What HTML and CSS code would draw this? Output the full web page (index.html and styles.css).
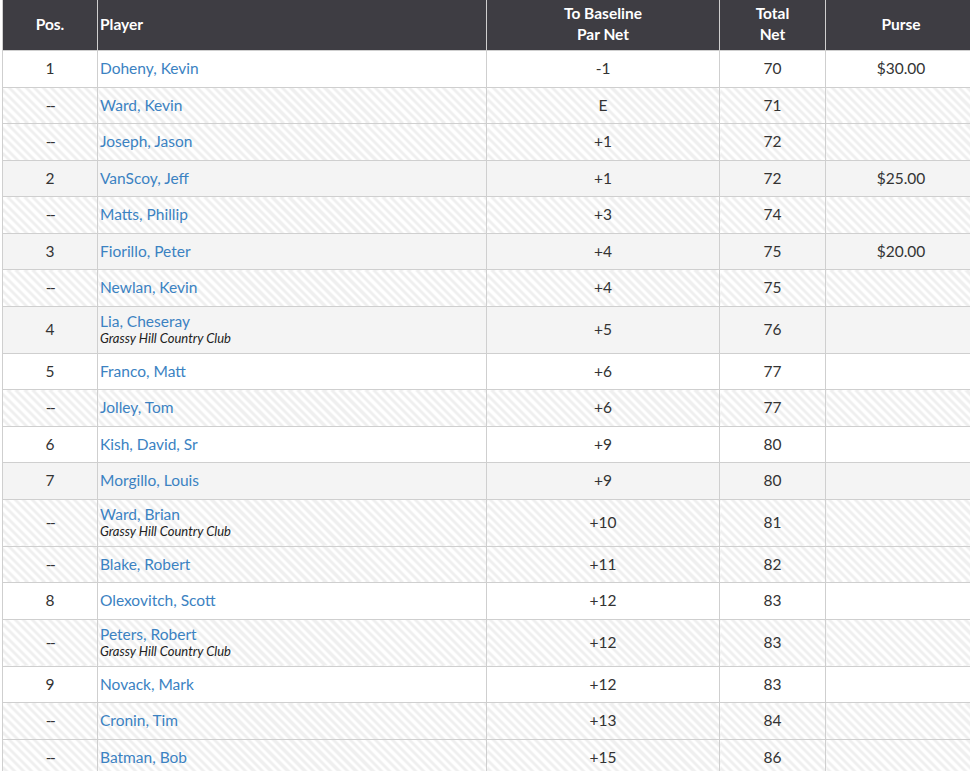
FILE: index.html
```html
<!DOCTYPE html>
<html>
<head>
<meta charset="utf-8">
<link rel="stylesheet" href="styles.css">
</head>
<body>
<div class="wrap">
<table class="board">
  <colgroup>
    <col class="c-pos"><col class="c-player"><col class="c-par"><col class="c-total"><col class="c-purse">
  </colgroup>
  <thead>
    <tr><th>Pos.</th><th class="left">Player</th><th>To Baseline<br>Par Net</th><th>Total<br>Net</th><th>Purse</th></tr>
  </thead>
  <tbody>
    <tr class="odd"><td>1</td><td class="player"><a>Doheny, Kevin</a></td><td>-1</td><td>70</td><td>$30.00</td></tr>
    <tr class="tie"><td class="dash">--</td><td class="player"><a>Ward, Kevin</a></td><td>E</td><td>71</td><td></td></tr>
    <tr class="tie"><td class="dash">--</td><td class="player"><a>Joseph, Jason</a></td><td>+1</td><td>72</td><td></td></tr>
    <tr class="even"><td>2</td><td class="player"><a>VanScoy, Jeff</a></td><td>+1</td><td>72</td><td>$25.00</td></tr>
    <tr class="tie"><td class="dash">--</td><td class="player"><a>Matts, Phillip</a></td><td>+3</td><td>74</td><td></td></tr>
    <tr class="even"><td>3</td><td class="player"><a>Fiorillo, Peter</a></td><td>+4</td><td>75</td><td>$20.00</td></tr>
    <tr class="tie"><td class="dash">--</td><td class="player"><a>Newlan, Kevin</a></td><td>+4</td><td>75</td><td></td></tr>
    <tr class="even"><td>4</td><td class="player two"><a>Lia, Cheseray</a><span class="club">Grassy Hill Country Club</span></td><td>+5</td><td>76</td><td></td></tr>
    <tr class="odd"><td>5</td><td class="player"><a>Franco, Matt</a></td><td>+6</td><td>77</td><td></td></tr>
    <tr class="tie"><td class="dash">--</td><td class="player"><a>Jolley, Tom</a></td><td>+6</td><td>77</td><td></td></tr>
    <tr class="odd"><td>6</td><td class="player"><a>Kish, David, Sr</a></td><td>+9</td><td>80</td><td></td></tr>
    <tr class="even"><td>7</td><td class="player"><a>Morgillo, Louis</a></td><td>+9</td><td>80</td><td></td></tr>
    <tr class="tie"><td class="dash">--</td><td class="player two"><a>Ward, Brian</a><span class="club">Grassy Hill Country Club</span></td><td>+10</td><td>81</td><td></td></tr>
    <tr class="tie"><td class="dash">--</td><td class="player"><a>Blake, Robert</a></td><td>+11</td><td>82</td><td></td></tr>
    <tr class="odd"><td>8</td><td class="player"><a>Olexovitch, Scott</a></td><td>+12</td><td>83</td><td></td></tr>
    <tr class="tie"><td class="dash">--</td><td class="player two"><a>Peters, Robert</a><span class="club">Grassy Hill Country Club</span></td><td>+12</td><td>83</td><td></td></tr>
    <tr class="odd"><td>9</td><td class="player"><a>Novack, Mark</a></td><td>+12</td><td>83</td><td></td></tr>
    <tr class="tie"><td class="dash">--</td><td class="player"><a>Cronin, Tim</a></td><td>+13</td><td>84</td><td></td></tr>
    <tr class="tie"><td class="dash">--</td><td class="player"><a>Batman, Bob</a></td><td>+15</td><td>86</td><td></td></tr>
  </tbody>
</table>
</div>
</body>
</html>
```

FILE: styles.css
```css
html, body {
  margin: 0;
  padding: 0;
  background: #fff;
  overflow: hidden;
}
.wrap {
  padding-left: 2px;
  width: 1000px;
}
.board {
  border-collapse: collapse;
  table-layout: fixed;
  width: 974px;
  font-family: Lato, "Open Sans", sans-serif;
  font-size: 15.5px;
  color: #333;
}
.c-pos { width: 95px; }
.c-player { width: 389px; }
.c-par { width: 233px; }
.c-total { width: 106px; }
.c-purse { width: 151px; }
.board th {
  background: #3e3d43;
  color: #fff;
  font-weight: 700;
  font-size: 15.5px;
  line-height: 21px;
  height: 41px;
  padding: 3px 3px 5px;
  text-align: center;
  border: 1px solid #cfcfcf;
  border-top: 0;
}
.board th.left { text-align: left; padding-left: 2px; }
.board td {
  border: 1px solid #cfcfcf;
  padding: 8.25px 3px 9.25px;
  line-height: 18px;
  text-align: center;
  vertical-align: middle;
}
.board td.player {
  text-align: left;
  padding-left: 2px;
}
.board td.player.two {
  padding-top: 5px;
  padding-bottom: 7px;
}
.player a {
  display: block;
  color: #3b82c2;
  text-decoration: none;
}
.club {
  display: block;
  font-size: 13px;
  font-style: italic;
  line-height: 16px;
  color: #222;
}
.dash { letter-spacing: -1.5px; }
tr.odd td { background: #fff; }
tr.even td { background: #f4f4f4; }
tr.tie td {
  background: repeating-linear-gradient(45deg, #ffffff 0, #ffffff 3px, #efefef 3px, #efefef 6px);
}
```
